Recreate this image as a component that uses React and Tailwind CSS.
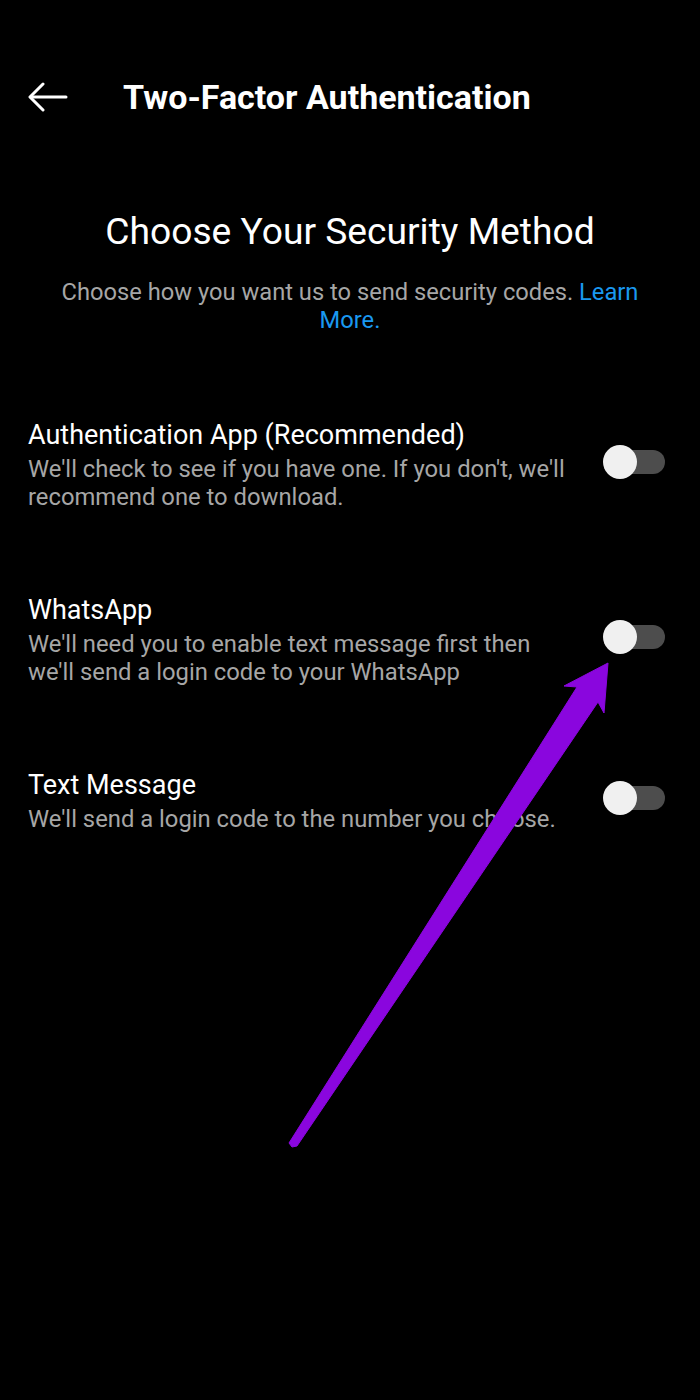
import { useState } from 'react'

const methods = [
  {
    id: 'app',
    title: 'Authentication App (Recommended)',
    desc: "We'll check to see if you have one. If you don't, we'll recommend one to download.",
  },
  {
    id: 'whatsapp',
    title: 'WhatsApp',
    desc: "We'll need you to enable text message first then we'll send a login code to your WhatsApp",
  },
  {
    id: 'sms',
    title: 'Text Message',
    desc: "We'll send a login code to the number you choose.",
  },
]

function Toggle({ on, onClick }) {
  return (
    <button onClick={onClick} className="relative w-[62px] h-[34px] shrink-0 mb-[6px]">
      <span className="absolute left-[4px] right-0 top-[5px] h-[24px] rounded-full bg-[#4d4d4d]"></span>
      <span
        className={`absolute top-0 w-[34px] h-[34px] rounded-full bg-[#f0f0f0] ${on ? 'left-[28px]' : 'left-0'}`}
      ></span>
    </button>
  )
}

export default function App() {
  const [enabled, setEnabled] = useState({})

  return (
    <div className="relative min-h-[1400px] bg-black text-white pt-[62px] font-['Roboto',sans-serif]">
      {/* Header */}
      <header className="flex items-center h-[70px] pl-[28px]">
        <svg width="40" height="30" viewBox="0 0 40 30" fill="none" stroke="white" strokeWidth="3" strokeLinecap="round" strokeLinejoin="round">
          <path d="M38 15H3" />
          <path d="M15 2L2 15L15 28" />
        </svg>
        <h2 className="ml-[55px] text-[34px] font-bold leading-none">Two-Factor Authentication</h2>
      </header>

      <h1 className="mt-[77px] text-center text-[37.2px] leading-[44px]">Choose Your Security Method</h1>
      <p className="mt-[25px] px-[52px] text-center text-[23.7px] leading-[28px] text-[#a6a6a6]">
        Choose how you want us to send security codes. <span className="text-[#1a98f0]">Learn More.</span>
      </p>

      {/* Methods */}
      <div className="mt-[85px] flex flex-col gap-[83px]">
        {methods.map((m) => (
          <div key={m.id} className="flex items-center gap-[27px] pl-[28px] pr-[35px]">
            <div className="flex-1">
              <p className="text-[27px] leading-[32px]">{m.title}</p>
              <p className="mt-[4px] text-[23.8px] leading-[28px] text-[#a6a6a6]">{m.desc}</p>
            </div>
            <Toggle
              on={!!enabled[m.id]}
              onClick={() => setEnabled({ ...enabled, [m.id]: !enabled[m.id] })}
            />
          </div>
        ))}
      </div>

      {/* annotation arrow */}
      <svg className="absolute inset-0 pointer-events-none" width="700" height="1400" viewBox="0 0 700 1400">
        <polygon
          points="608,663 604,713 598,702 297,1146 292,1147 289,1143 577,687 564,686"
          fill="#8a06de"
          stroke="#8a06de"
          strokeWidth="1"
          strokeLinejoin="round"
        />
      </svg>
    </div>
  )
}
